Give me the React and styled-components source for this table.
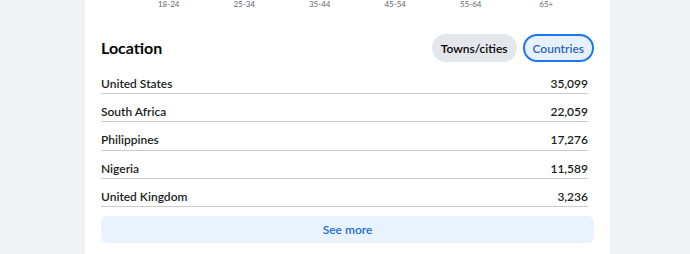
import styled, { createGlobalStyle } from 'styled-components';

const GlobalStyle = createGlobalStyle`
  body {
    margin: 0;
    background: #f0f2f5;
    font-family: Lato, 'Noto Sans', 'Liberation Sans', sans-serif;
    color: #1c1e21;
  }
`;

const Page = styled.div`
  display: flex;
  align-items: flex-start;
  padding-left: 85px;
  height: 254px;
  overflow: hidden;
`;

const Card = styled.div`
  width: 525px;
  background: #fff;
  padding: 0 16px 24px;
  box-sizing: border-box;
  display: flex;
  flex-direction: column;
  flex-shrink: 0;
`;

const Axis = styled.div`
  display: grid;
  grid-template-columns: repeat(6, 75.5px);
  padding-left: 30px;
  font-size: 8px;
  line-height: 8px;
  color: #65676b;
  span {
    text-align: center;
  }
`;

const Header = styled.div`
  display: flex;
  align-items: center;
  justify-content: space-between;
  margin-top: 26px;
  height: 28px;
  h2 {
    margin: 0;
    margin-top: -2px;
    font-size: 16px;
    font-weight: 700;
    color: #050505;
  }
`;

const Toggle = styled.div`
  display: flex;
  gap: 6px;
`;

const Pill = styled.button`
  height: 28px;
  padding: 0 ${(p) => (p.$active ? '8px' : '7px')};
  border-radius: 14px;
  font-family: inherit;
  font-size: 12px;
  font-weight: 600;
  cursor: pointer;
  box-sizing: border-box;
  border: 2px solid ${(p) => (p.$active ? '#1877f2' : 'transparent')};
  background: ${(p) => (p.$active ? '#e7f0fd' : '#e4e6eb')};
  color: ${(p) => (p.$active ? '#2d64bc' : '#050505')};
`;

const List = styled.div`
  display: flex;
  flex-direction: column;
  margin: 4px 6px 0 0;
`;

const Row = styled.div`
  display: flex;
  justify-content: space-between;
  height: 28.2px;
  flex-shrink: 0;
  box-sizing: border-box;
  padding-top: 10px;
  font-size: 12px;
  line-height: 16px;
  font-weight: 600;
  color: #1c1e21;
  border-bottom: 1.5px solid #c9ccd1;
`;

const SeeMore = styled.button`
  margin-top: 9px;
  height: 27px;
  flex-shrink: 0;
  width: 100%;
  border: none;
  border-radius: 6px;
  background: #e9f3ff;
  color: #1b6ed6;
  font-family: inherit;
  font-size: 12px;
  font-weight: 600;
  cursor: pointer;
`;

const ages = ['18-24', '25-34', '35-44', '45-54', '55-64', '65+'];

const countries = [
  ['United States', '35,099'],
  ['South Africa', '22,059'],
  ['Philippines', '17,276'],
  ['Nigeria', '11,589'],
  ['United Kingdom', '3,236'],
];

export default function App() {
  return (
    <Page>
      <GlobalStyle />
      <Card>
        <Axis>
          {ages.map((a) => (
            <span key={a}>{a}</span>
          ))}
        </Axis>
        <Header>
          <h2>Location</h2>
          <Toggle>
            <Pill>Towns/cities</Pill>
            <Pill $active>Countries</Pill>
          </Toggle>
        </Header>
        <List>
          {countries.map(([name, count]) => (
            <Row key={name}>
              <span>{name}</span>
              <span>{count}</span>
            </Row>
          ))}
        </List>
        <SeeMore>See more</SeeMore>
      </Card>
    </Page>
  );
}
